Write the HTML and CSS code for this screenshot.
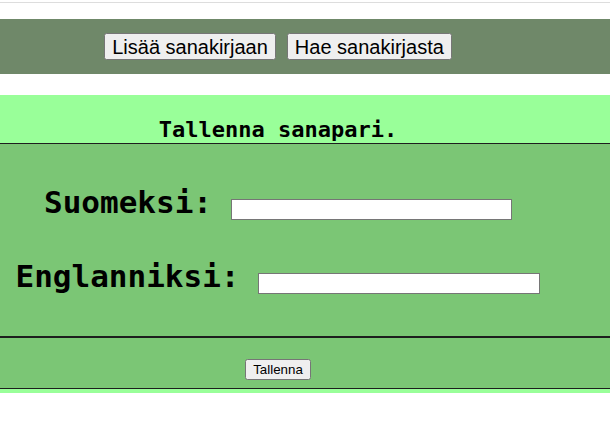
FILE: index.html
```html
<!DOCTYPE html>
<html lang="fi">
<head>
<meta charset="utf-8">
<title>Sanakirja</title>
<link rel="stylesheet" href="styles.css">
</head>
<body>
<div class="topline"></div>
<nav class="nav">
  <button class="nav-btn">Lisää sanakirjaan</button>
  <button class="nav-btn">Hae sanakirjasta</button>
</nav>
<section class="panel">
  <h2 class="title">Tallenna sanapari.</h2>
  <div class="fields">
    <div class="row"><label class="label" for="fi">Suomeksi:</label><input class="field field-fi" id="fi" type="text"></div>
    <div class="row"><label class="label" for="en">Englanniksi:</label><input class="field field-en" id="en" type="text"></div>
  </div>
  <div class="actions">
    <button class="save-btn">Tallenna</button>
  </div>
</section>
</body>
</html>
```
FILE: styles.css
```css
html, body {
  margin: 0;
  padding: 0;
  background: #ffffff;
}

.topline {
  margin-top: 2px;
  height: 1px;
  background: #dddddd;
}

.nav {
  margin-top: 16px;
  background: #6f8869;
  padding: 14px 54px 14px 0;
  display: flex;
  justify-content: center;
  gap: 11px;
}

.nav-btn {
  font: 20px "Liberation Sans", Arial, sans-serif;
  margin: 0;
  height: 27px;
  padding: 1px 6px;
}

.panel {
  margin-top: 21px;
  background: #99ff99;
  padding-bottom: 4px;
}

.title {
  margin: 0;
  padding: 21px 54px 0 0;
  font: bold 22px/27px "DejaVu Sans Mono", monospace;
  text-align: center;
  color: #000;
}

.fields {
  background: #7bc675;
  border-top: 1px solid #1e1e1e;
  border-bottom: 1px solid #1e1e1e;
  padding: 40px 54px 42px 0;
  display: flex;
  flex-direction: column;
  gap: 38px;
}

.row {
  display: flex;
  justify-content: center;
  align-items: baseline;
  gap: 19px;
  height: 36px;
}

.label {
  font: bold 31px/36px "DejaVu Sans Mono", monospace;
  color: #000;
}

.field {
  font: 13.33px "Liberation Sans", Arial, sans-serif;
  margin: 0;
  height: 21px;
  box-sizing: border-box;
  padding: 0 2px 2px;
  border: 1px solid #767676;
  border-radius: 0;
  background: #fff;
}

.field-fi {
  width: 281px;
}

.field-en {
  width: 282px;
}

.actions {
  background: #7bc675;
  border-top: 1px solid #1e1e1e;
  border-bottom: 1px solid #1e1e1e;
  padding: 21px 54px 8px 0;
  display: flex;
  justify-content: center;
}

.save-btn {
  font: 13.33px "Liberation Sans", Arial, sans-serif;
  margin: 0;
  height: 21px;
  padding: 1px 6px;
}
```
